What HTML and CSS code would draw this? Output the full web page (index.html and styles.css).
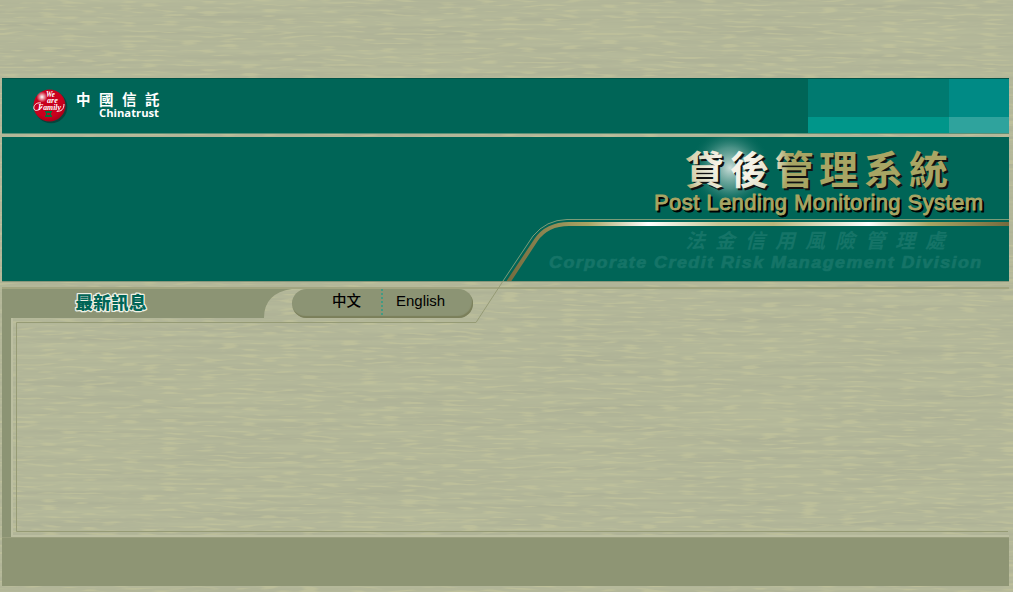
FILE: index.html
```
<!DOCTYPE html>
<html lang="zh-Hant">
<head>
<meta charset="utf-8">
<title>貸後管理系統 Post Lending Monitoring System</title>
<link rel="stylesheet" href="styles.css">
</head>
<body>
<svg class="texture" width="1013" height="592" aria-hidden="true">
  <filter id="grain" x="0" y="0" width="100%" height="100%" color-interpolation-filters="sRGB">
    <feTurbulence type="fractalNoise" baseFrequency="0.006 0.22" numOctaves="2" seed="8"/>
    <feColorMatrix values="0.06 0 0 0 0.670  0.06 0 0 0 0.685  0.03 0 0 0 0.583  0 0 0 0 1" result="base"/>
    <feTurbulence type="fractalNoise" baseFrequency="0.05 0.42" numOctaves="1" seed="31"/>
    <feColorMatrix values="0 0 0 0 0.765  0 0 0 0 0.769  0 0 0 0 0.61  6 0 0 0 -3.2"/>
    <feComposite in2="base" operator="over"/>
    <feComposite in2="base" operator="arithmetic" k2="0.65" k3="0.35"/>
  </filter>
  <rect width="1013" height="592" filter="url(#grain)"/>
</svg>
<div class="page">
  <header class="topbar">
    <div class="brand">
      <svg class="seal" width="36" height="37" viewBox="0 0 36 37">
        <defs>
          <radialGradient id="red" cx=".45" cy=".4" r=".6"><stop offset=".75" stop-color="#c9001d"/><stop offset="1" stop-color="#a80018"/></radialGradient>
          <radialGradient id="shine"><stop offset="0" stop-color="#fff"/><stop offset="1" stop-color="#fff" stop-opacity="0"/></radialGradient>
        </defs>
        <circle cx="18" cy="19" r="16.3" fill="#06443c"/>
        <circle cx="16.500" cy="17.500" r="16" fill="url(#red)"/>
        <circle cx="9" cy="9" r="5.500" fill="url(#shine)"/>
        <g class="script" fill="#fff">
          <text x="13" y="9" textLength="9" lengthAdjust="spacingAndGlyphs">We</text>
          <text x="14" y="15" textLength="11" lengthAdjust="spacingAndGlyphs">are</text>
          <text x="5" y="21.500" textLength="23" lengthAdjust="spacingAndGlyphs">Family</text>
        </g>
        <path d="M8 15c-5-1-8 3-7 6s7 1 8-3M24 23c4 1 7-2 7-7" fill="none" stroke="#fff" stroke-width=".9"/>
        <path d="M12 23h7v1.600h-1v2.600h1V29h-7v-1.800h1v-2.600h-1zM14 25v2h3v-2z" fill="#00743f" fill-rule="evenodd"/>
      </svg>
      <svg class="brand-name" width="90" height="32" viewBox="0 0 90 32">
        <text class="brand-zh" x="0 23 46 69" y="14.500">中國信託</text>
        <text class="brand-en" x="23" y="27" textLength="60" lengthAdjust="spacingAndGlyphs">Chinatrust</text>
      </svg>
    </div>
    <div class="tiles"><i class="tile-a"></i><i class="tile-b"></i><i class="tile-c"></i><i class="tile-d"></i></div>
  </header>
  <section class="banner">
    <svg width="1007" height="144" viewBox="2 137 1007 144">
      <defs>
        <radialGradient id="glow"><stop offset="0" stop-color="#d3e3de" stop-opacity=".95"/><stop offset=".5" stop-color="#72aaa0" stop-opacity=".65"/><stop offset="1" stop-color="#006557" stop-opacity="0"/></radialGradient>
        <radialGradient id="lit" gradientUnits="userSpaceOnUse" cx="735" cy="164" r="60"><stop offset=".3" stop-color="#f5f3e8"/><stop offset=".72" stop-color="#d7d4b4"/><stop offset=".9" stop-color="#a8a564"/></radialGradient>
      </defs>
      <circle cx="730" cy="168" r="41" fill="url(#glow)"/>
      <g class="title-zh">
        <text x="687 732 776.500 821 866 911" y="186" fill="#111">貸後管理系統</text>
        <text x="685 730 774.500 819 864 909" y="184" fill="url(#lit)">貸後管理系統</text>
      </g>
      <g class="title-en">
        <text x="656" y="212" textLength="329" fill="#000">Post Lending Monitoring System</text>
        <text x="654" y="210" textLength="329" fill="#a8a564">Post Lending Monitoring System</text>
      </g>
      <g fill="#157467">
        <text class="dept-zh" transform="translate(0 248) skewX(-14)" x="685 715 745 775 805 835 865 895 925" y="0">法金信用風險管理處</text>
        <text class="dept-en" transform="translate(549 268) scale(1.12 1)" textLength="386">Corporate Credit Risk Management Division</text>
      </g>
    </svg>
  </section>
  <nav class="tabs">
    <div class="news"><svg width="80" height="24"><text class="news-text" x="3.500" y="18.500" textLength="71">最新訊息</text></svg></div>
    <div class="lang"><a class="zh">中文</a><i class="dots"></i><a class="en">English</a></div>
  </nav>
  <main class="content"></main>
  <footer class="footer"></footer>
  <svg class="ornament" width="1007" height="508" viewBox="2 78 1007 508" aria-hidden="true">
    <defs>
      <linearGradient id="gold" gradientUnits="userSpaceOnUse" x1="508" y1="0" x2="1009" y2="0">
        <stop offset="0" stop-color="#756b3e"/><stop offset=".07" stop-color="#8c8450"/><stop offset=".16" stop-color="#a8a564"/><stop offset=".28" stop-color="#fff"/><stop offset=".42" stop-color="#c9c696"/><stop offset=".53" stop-color="#b9b67c"/><stop offset=".72" stop-color="#fff"/><stop offset=".84" stop-color="#a8a564"/><stop offset="1" stop-color="#756b3e"/>
      </linearGradient>
      <clipPath id="bannerClip"><rect x="2" y="137" width="1007" height="144"/></clipPath>
    </defs>
    <path d="M507 284L536 240Q547 224 569 224H1009" fill="none" stroke="url(#gold)" stroke-width="4" clip-path="url(#bannerClip)"/>
    <path d="M1009 219.500H567Q546 220 533 236L503 281" fill="none" stroke="#7b9c78"/>
    <path d="M503 281L476 322.500H16.500V531.500H1008" fill="none" stroke="#969b75"/>
  </svg>
</div>
</body>
</html>
```
FILE: styles.css
```
* { box-sizing: border-box; }
body {
  margin: 0;
  height: 592px;
  overflow: hidden;
  background: #b4b798;
  font-family: "Liberation Sans", "Noto Sans CJK TC", sans-serif;
}
.texture { position: absolute; inset: 0; z-index: -1; }
.page {
  position: relative;
  width: 1007px;
  margin: 0 0 0 2px;
  padding-top: 78px;
}
svg { display: block; }
.topbar {
  display: flex;
  justify-content: space-between;
  height: 56px;
  background: #006557;
  border-top: 1px solid #005347;
  border-bottom: 1px solid #5c9078;
}
.brand { display: flex; gap: 7px; padding: 9px 0 0 31px; }
.script { font: italic 700 8px "Liberation Serif", serif; }
.brand-name { fill: #fff; margin-top: 2px; overflow: visible; }
.brand-zh { font: 700 14.5px "Noto Sans CJK TC", sans-serif; }
.brand-en { font: 700 11px "Open Sans", sans-serif; }
.tiles {
  display: grid;
  grid-template: 38px 1fr / 141px 60px;
  width: 201px;
}
.tile-a { background: #007a70; }
.tile-b { background: #008a85; }
.tile-c { background: #00968a; }
.tile-d { background: #2fa39d; }
.banner {
  height: 145px;
  margin-top: 3px;
  background: #006557;
  border-bottom: 1px solid #87977b;
}
.title-zh { font: 700 39px "Noto Sans CJK TC", sans-serif; }
.title-en { font: 400 22px "Liberation Sans", sans-serif; stroke-width: .9px; }
.title-en text:first-child { stroke: #000; }
.title-en text:last-child { stroke: #a8a564; }
.dept-zh { font: 700 20px "Noto Sans CJK TC", sans-serif; }
.dept-en { font: italic 900 16px "Liberation Sans", sans-serif; stroke: #157467; stroke-width: .7px; }
.tabs {
  display: flex;
  height: 31px;
  margin-top: 5px;
  border-top: 2px solid #a2a581;
}
.news {
  width: 290px;
  height: 29px;
  padding: 1px 0 0 70px;
  background: #8c9474;
  clip-path: path("M0 0H290Q262 4 262 29H0Z");
}
.news-text {
  font: 900 17.5px "Noto Sans CJK TC", sans-serif;
  fill: #006557;
  stroke: #eef1e5;
  stroke-width: 2.5px;
  paint-order: stroke;
  stroke-linejoin: round;
}
.lang {
  display: grid;
  grid-template-columns: 89px 2px 90px;
  height: 29px;
  color: #000;
  background: #8c9474;
  border-radius: 15px;
  box-shadow: inset -1px -2px 1px #7b7f5a;
}
.zh { padding-left: 40px; font: 500 14.5px/22px "Noto Sans CJK TC", sans-serif; }
.dots {
  height: 27px;
  background: repeating-linear-gradient(#429b83 0 2px, transparent 2px 4px);
}
.en { padding-left: 13px; font-size: 15px; line-height: 23px; }
.content {
  height: 219px;
  border-left: 9px solid #8c9474;
  box-shadow: inset 2px 0 #bcbfa1, inset 0 -2px #bcbfa1;
}
.footer {
  height: 49px;
  background: #8e9574;
  border-top: 1px solid #9a9f7e;
}
.ornament { position: absolute; top: 78px; left: 0; pointer-events: none; }
```
